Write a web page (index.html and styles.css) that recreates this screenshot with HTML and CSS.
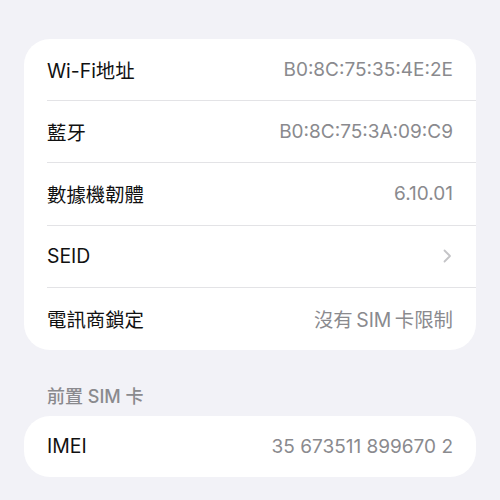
FILE: index.html
```html
<!DOCTYPE html>
<html lang="zh-Hant">
<head>
    <meta charset="UTF-8">
    <title>關於本機</title>
<link rel="stylesheet" href="styles.css">
</head>
<body class="page">
<div class="group">
    <div class="row">
        <span class="label">Wi-Fi地址</span>
        <span class="value">B0:8C:75:35:4E:2E</span>
    </div>
    <div class="row">
        <span class="label">藍牙</span>
        <span class="value">B0:8C:75:3A:09:C9</span>
    </div>
    <div class="row">
        <span class="label">數據機韌體</span>
        <span class="value">6.10.01</span>
    </div>
    <div class="row">
        <span class="label">SEID</span>
        <svg class="chevron" width="9" height="14" viewBox="0 0 9 14">
            <path d="M1.5 1.5 L7 7 L1.5 12.5" fill="none" stroke="#c4c4c7" stroke-width="1.8" stroke-linecap="round" stroke-linejoin="round"/>
        </svg>
    </div>
    <div class="row">
        <span class="label">電訊商鎖定</span>
        <span class="value value-cjk">沒有 SIM 卡限制</span>
    </div>
</div>
<div class="header">前置 SIM 卡</div>
<div class="group">
    <div class="row row-single">
        <span class="label">IMEI</span>
        <span class="value">35 673511 899670 2</span>
    </div>
</div>
</body>
</html>
```

FILE: styles.css
```css
.page{
    margin: 0;
    padding: 39px 24px 0 24px;
    background-color: #f2f2f7;
    font-family: "Inter", "Noto Sans CJK TC", sans-serif;
    overflow: hidden;
}
.group
{
    background-color: #ffffff;
    border-radius: 26px;
    padding-left: 23px;
}
.row{
    display: flex;
    align-items: center;
    justify-content: space-between;
    height: 62.2px;
    padding-right: 23px;
    border-bottom: 1px solid #e3e3e6;
    box-sizing: border-box;
}
.row:last-child{
    border-bottom: none;
}
.row-single{
    height: 61px;
}
.label{
    font-size: 19.4px;
    color: #111111;
}
.value{
    font-size: 19px;
    color: #8a8a8e;
}
.value-cjk{
    font-size: 19.4px;
    word-spacing: -2px;
}
.chevron{
    margin-right: 1px;
}
.header{
    padding: 34px 0 6px 23px;
    font-size: 18px;
    font-weight: 500;
    color: #8a8a8e;
    line-height: 26px;
}
```
